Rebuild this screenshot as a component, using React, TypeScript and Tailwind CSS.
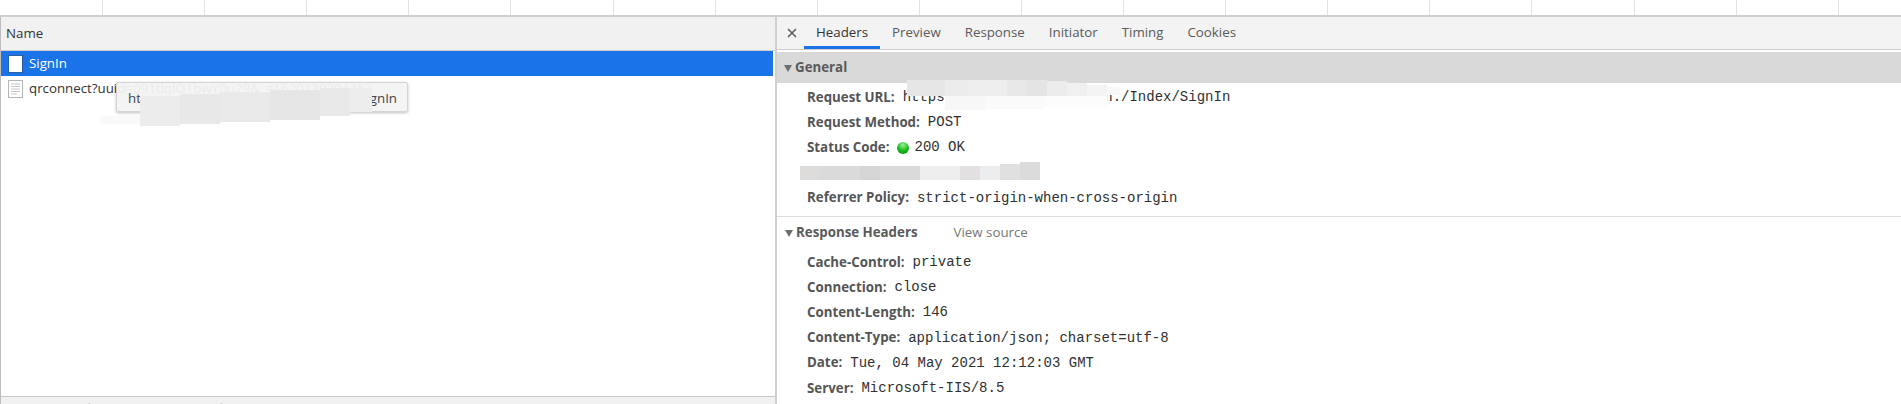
const ticks = Array.from({ length: 18 }, (_, i) => i);

const general = [
  { name: 'Request URL:', value: 'https://xxxxxxxxxxxxxxven./Index/SignIn' },
  { name: 'Request Method:', value: 'POST' },
  { name: 'Status Code:', value: '200 OK', dot: true },
  { name: '', value: '' },
  { name: 'Referrer Policy:', value: 'strict-origin-when-cross-origin' },
];

const response = [
  { name: 'Cache-Control:', value: 'private' },
  { name: 'Connection:', value: 'close' },
  { name: 'Content-Length:', value: '146' },
  { name: 'Content-Type:', value: 'application/json; charset=utf-8' },
  { name: 'Date:', value: 'Tue, 04 May 2021 12:12:03 GMT' },
  { name: 'Server:', value: 'Microsoft-IIS/8.5' },
];

// painted-over patches in the screenshot, [x, y, w, h, colour]
const urlSmear: [number, number, number, number, string][] = [
  [0, 0, 38, 16, '#e6e6e6'],
  [38, 0, 22, 16, '#ececec'],
  [60, 0, 40, 16, '#eeeeee'],
  [100, 0, 20, 16, '#e8e8e8'],
  [120, 0, 20, 16, '#e4e4e4'],
  [140, 1, 20, 16, '#ececec'],
  [160, 3, 20, 15, '#f0f0f0'],
  [180, 5, 20, 13, '#f4f4f4'],
  [200, 7, 13, 8, '#f8f8f8'],
  [38, 16, 40, 14, '#f7f7f7'],
  [78, 16, 60, 13, '#fafafa'],
  [138, 16, 62, 11, '#fcfcfc'],
];

const tipSmear: [number, number, number, number, string][] = [
  [0, 28, 40, 8, '#f9f9f9'],
  [40, 8, 40, 30, '#ececec'],
  [80, 6, 40, 30, '#e8e8e8'],
  [120, 4, 50, 30, '#eaeaea'],
  [170, 2, 50, 30, '#e6e6e6'],
  [220, 0, 30, 28, '#e9e9e9'],
  [250, 0, 22, 24, '#ededed'],
];

const statusSmear: [number, number, number, number, string][] = [
  [0, 5, 20, 14, '#dedcdb'],
  [20, 5, 40, 14, '#dadada'],
  [60, 5, 20, 14, '#d6d5d5'],
  [80, 5, 40, 14, '#dadada'],
  [120, 5, 40, 14, '#eeeeee'],
  [160, 5, 20, 14, '#e2e0e0'],
  [180, 5, 20, 14, '#ecedef'],
  [200, 3, 20, 16, '#e0e0e0'],
  [220, 1, 20, 18, '#dbdbdb'],
];

function Smear({ rects, x, y, w, h }: { rects: [number, number, number, number, string][]; x: number; y: number; w: number; h: number }) {
  return (
    <svg width={w} height={h} viewBox={`0 0 ${w} ${h}`} className="absolute" style={{ left: x, top: y }}>
      {rects.map(([rx, ry, rw, rh, c], i) => (
        <rect key={i} x={rx} y={ry} width={rw} height={rh} fill={c} />
      ))}
    </svg>
  );
}

function Row({ name, value, dot }: { name: string; value: string; dot?: boolean }) {
  return (
    <div className="flex h-[25.2px] items-center pl-[30px] whitespace-nowrap">
      <span className="font-bold text-[#555]">{name}</span>
      {dot && (
        <span className="ml-[8px] h-[12px] w-[12px] rounded-full bg-[radial-gradient(circle_at_50%_25%,#9df09d,#16b816_55%,#0a8a0a)]" />
      )}
      <span className={`${dot ? 'ml-[5px]' : 'ml-[8px]'} font-['Liberation_Mono',monospace] text-[14px] text-[#303030]`}>{value}</span>
    </div>
  );
}

function Arrow() {
  return (
    <svg width="8" height="7" viewBox="0 0 8 7" className="mr-[3px] shrink-0">
      <path d="M0 0h8L4 7z" fill="#6e6e6e" />
    </svg>
  );
}

function DocIcon({ selected }: { selected?: boolean }) {
  if (selected) {
    return (
      <svg width="15" height="18" viewBox="0 0 15 18" className="shrink-0">
        <rect x="0.5" y="0.5" width="14" height="17" fill="#fff" stroke="#2f5f9f" />
      </svg>
    );
  }
  return (
    <svg width="15" height="18" viewBox="0 0 15 18" className="shrink-0">
      <rect x="0.5" y="0.5" width="14" height="17" fill="#fff" stroke="#b5b5b5" />
      <path d="M3 4h9M3 6.5h9M3 9h9M3 11.5h9M3 14h6" stroke="#c8c8c8" />
    </svg>
  );
}

const tabs = ['Preview', 'Response', 'Initiator', 'Timing', 'Cookies'];

export default function App() {
  return (
    <div className="relative flex h-[404px] w-[1901px] flex-col overflow-hidden bg-white font-['Open_Sans',sans-serif] text-[13.3px] text-[#333]">
      {/* overview ruler */}
      <div className="flex h-[17px] shrink-0 border-b-2 border-[#cfcfcf] pl-[1px]">
        {ticks.map((i) => (
          <div key={i} className="h-full w-[102.1px] shrink-0 border-r border-[#e2e2e2]" />
        ))}
      </div>

      <div className="flex min-h-0 flex-1">
        {/* request list */}
        <div className="flex w-[775px] shrink-0 flex-col border-l border-[#bdbdbd]">
          <div className="flex h-[34px] shrink-0 items-center border-b border-[#cdcdcd] bg-[#f1f1f1] pl-[5px] text-[#333]">Name</div>
          <div className="mr-[2px] flex h-[25px] shrink-0 items-center gap-[6px] bg-[#1a73e8] pl-[7px] text-white">
            <DocIcon selected />
            <span>SignIn</span>
          </div>
          <div className="flex h-[25px] shrink-0 items-center gap-[6px] pl-[7px]">
            <DocIcon />
            <span className="whitespace-nowrap">qrconnect?uuid=091tlqlO1bwY0u29&amp;_=1620130394463</span>
          </div>
          <div className="flex-1" />
          <div className="flex h-[8px] shrink-0 items-end border-t border-[#c8c8c8] bg-[#f1f1f1]">
            <div className="ml-[88px] h-[1px] w-[1px] bg-[#bbb]" />
            <div className="ml-[131px] h-[1px] w-[1px] bg-[#bbb]" />
          </div>
        </div>

        {/* details */}
        <div className="flex min-w-0 flex-1 flex-col border-l-2 border-[#cfcfcf]">
          <div className="flex h-[33px] shrink-0 items-center border-b border-[#cdcdcd] bg-[#f3f3f3]">
            <svg width="10" height="10" viewBox="0 0 10 10" className="mr-[7px] ml-[10px] shrink-0">
              <path d="M1 1l8 8M9 1l-8 8" stroke="#5f5f5f" strokeWidth="1.6" />
            </svg>
            <div className="relative flex h-full items-center px-[12px] text-[#333]">
              Headers
              <div className="absolute right-0 bottom-0 left-0 h-[3px] bg-[#1a73e8]" />
            </div>
            {tabs.map((t) => (
              <div key={t} className="flex h-full items-center px-[12px] text-[#5a5a5a]">{t}</div>
            ))}
          </div>
          <div className="mt-[2px] flex h-[31px] shrink-0 items-center bg-[#d9d9d9] pt-[1px] pl-[7px] font-bold text-[#5a5a5a]">
            <Arrow />
            General
          </div>
          <div className="flex shrink-0 flex-col border-b border-[#dedede] pt-[2px] pb-[5px]">
            {general.map((r, i) => (
              <Row key={i} {...r} />
            ))}
          </div>
          <div className="flex h-[33px] shrink-0 items-center pl-[8px] font-bold text-[#5a5a5a]">
            <Arrow />
            Response Headers
            <span className="ml-[36px] font-normal text-[#777]">View source</span>
          </div>
          {response.map((r) => (
            <Row key={r.name} {...r} />
          ))}
        </div>
      </div>

      {/* tooltip, row text shows faintly through it */}
      <div className="absolute top-[82px] left-[116px] flex h-[30px] w-[292px] items-center justify-between rounded-[2px] border border-[#d4d4d4] bg-[#f3f3f3]/95 pt-[4px] pr-[10px] pl-[11px] text-[#444] shadow-[0_1px_3px_rgba(0,0,0,0.25)]">
        <span>ht</span>
        <span>signIn</span>
      </div>

      {/* redaction smears */}
      <Smear rects={tipSmear} x={100} y={88} w={272} h={38} />
      <Smear rects={urlSmear} x={907} y={80} w={213} h={30} />
      <Smear rects={statusSmear} x={800} y={161} w={240} h={20} />
    </div>
  );
}
